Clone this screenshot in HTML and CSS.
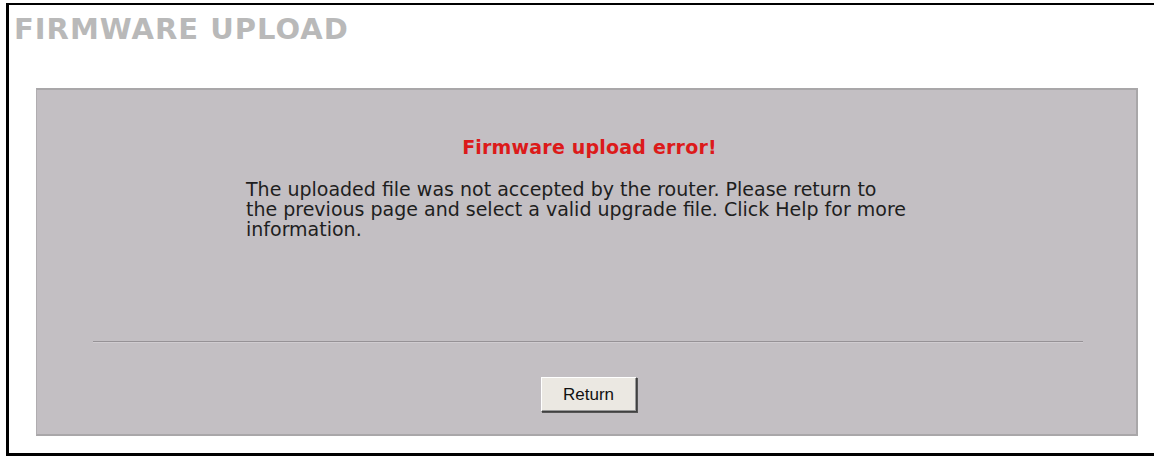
FILE: index.html
```html
<!DOCTYPE html>
<html>
<head>
<meta charset="utf-8">
<link rel="stylesheet" href="styles.css">
</head>
<body>
<div class="frame">
  <h1 class="title">FIRMWARE UPLOAD</h1>
  <div class="panel">
    <div class="content">
      <div class="error">Firmware upload error!</div>
      <p class="msg">The uploaded file was not accepted by the router. Please return to<br>the previous page and select a valid upgrade file. Click Help for more<br>information.</p>
    </div>
    <div class="rule"></div>
    <div class="actions">
      <button class="btn" type="button">Return</button>
    </div>
  </div>
</div>
</body>
</html>
```

FILE: styles.css
```css
html, body {
  margin: 0;
  padding: 0;
  background: #ffffff;
}
.frame {
  box-sizing: border-box;
  margin: 3px 0 0 6px;
  height: 453px;
  border-top: 2px solid #000;
  border-left: 3px solid #000;
  border-bottom: 3px solid #000;
  display: flex;
  flex-direction: column;
}
.title {
  margin: 0;
  padding: 10px 0 0 5px;
  height: 83px;
  box-sizing: border-box;
  font-family: "DejaVu Sans", Verdana, sans-serif;
  font-weight: bold;
  font-size: 29px;
  line-height: 29px;
  letter-spacing: 1px;
  color: #b9b9b9;
}
.panel {
  box-sizing: border-box;
  margin-left: 27px;
  width: 1102px;
  height: 348px;
  background: #c3bfc3;
  border-top: 2px solid #a9a7a9;
  border-left: 1px solid #b0adb0;
  border-right: 2px solid #a9a7a9;
  border-bottom: 2px solid #a9a7a9;
  display: flex;
  flex-direction: column;
}
.content {
  height: 251px;
  padding-top: 47px;
  box-sizing: border-box;
  font-family: "DejaVu Sans", Verdana, sans-serif;
  font-size: 19px;
  line-height: 20px;
  color: #1e1e1e;
}
.error {
  text-align: center;
  color: #dc1a1a;
  font-weight: bold;
  letter-spacing: 0.2px;
  padding-left: 6px;
}
.msg {
  margin: 22px 0 0 209px;
}
.rule {
  margin: 0 53px 0 56px;
  height: 1px;
  background: #969296;
  border-bottom: 1px solid #d0ccd0;
}
.actions {
  display: flex;
  justify-content: center;
  padding-top: 34px;
  padding-left: 4px;
}
.btn {
  box-sizing: border-box;
  width: 96px;
  height: 35px;
  font-family: "Liberation Sans", Arial, sans-serif;
  font-size: 17px;
  color: #111;
  background: #ebe8e2;
  border: 1px solid;
  border-color: #ffffff #404040 #404040 #ffffff;
  box-shadow: inset -1px -1px 0 #999, 1px 1px 0 #555;
  padding: 0;
}
```
